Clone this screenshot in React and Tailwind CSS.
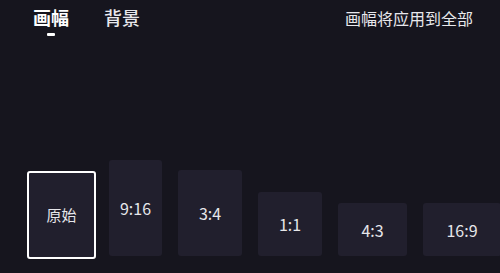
export default function App() {
  const ratios = [
    { label: "9:16", cls: "w-[53px] h-[96px] ml-[13px]" },
    { label: "3:4", cls: "w-[64px] h-[86px] ml-[16px]" },
    { label: "1:1", cls: "w-[64px] h-[64px] ml-[16px]" },
    { label: "4:3", cls: "w-[69px] h-[53px] ml-[16px]" },
    { label: "16:9", cls: "w-[78px] h-[53px] ml-[16px]" },
  ];

  return (
    <div
      className="w-[500px] h-[273px] bg-[#16151e] overflow-hidden flex flex-col"
      style={{ fontFamily: '"Noto Sans CJK SC", "Noto Sans", sans-serif' }}
    >
      <div className="flex items-start justify-between pl-[33px] pr-[27px] pt-[6px]">
        <div className="flex gap-[35px]">
          <div className="flex flex-col items-center">
            <span className="text-[18px] leading-[22px] font-bold text-white">画幅</span>
            <span className="mt-[5px] w-[8px] h-[3px] bg-white rounded-[1px]"></span>
          </div>
          <span className="text-[18px] leading-[22px] font-medium text-[#e8e8ec]">背景</span>
        </div>
        <span className="text-[16px] leading-[22px] text-[#e8e8ec] pt-[1px]">画幅将应用到全部</span>
      </div>
      <div className="flex-1"></div>
      <div className="flex items-end pl-[27px] pb-[17px]">
        <div className="w-[69px] h-[88px] shrink-0 mb-[-3px] rounded-[3px] border-2 border-white bg-[#211f2d] flex items-center justify-center">
          <span className="text-[15px] text-[#e6e6ea]">原始</span>
        </div>
        {ratios.map((r) => (
          <div
            key={r.label}
            className={`${r.cls} shrink-0 rounded-[3px] bg-[#211f2d] flex items-center justify-center`}
          >
            <span className="text-[16px] text-[#e6e6ea]">{r.label}</span>
          </div>
        ))}
      </div>
    </div>
  );
}
